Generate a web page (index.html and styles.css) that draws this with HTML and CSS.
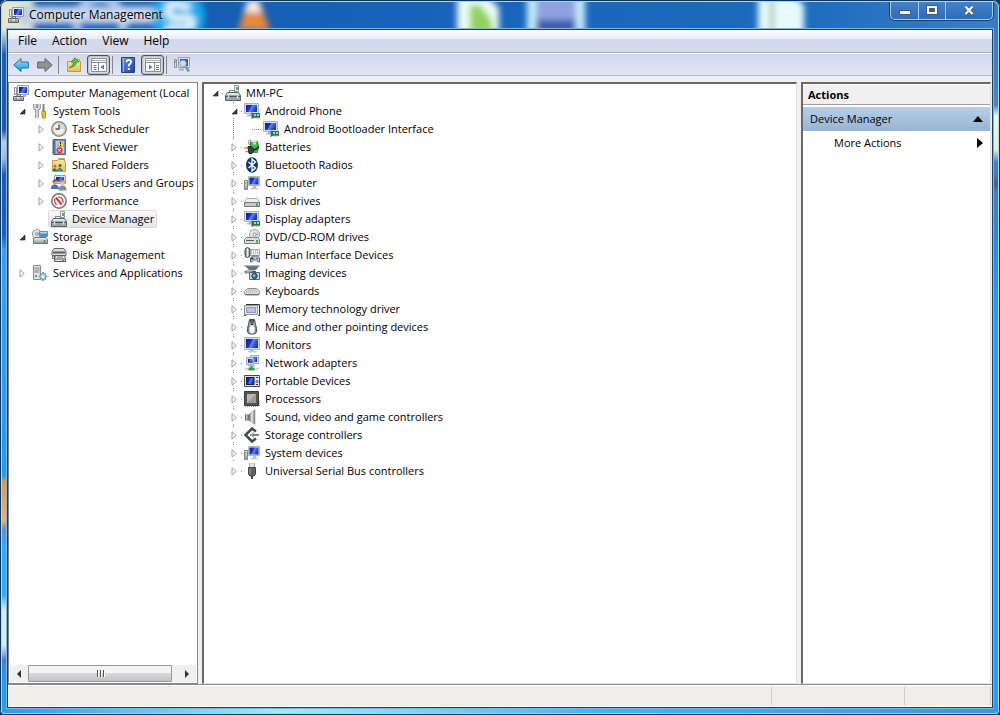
FILE: index.html
```html
<!DOCTYPE html>
<html lang="en">
<head>
<meta charset="utf-8">
<title>Computer Management</title>
<link rel="stylesheet" href="styles.css">
</head>
<body>
<svg width="0" height="0" class="defs" aria-hidden="true">
  <defs>
    <linearGradient id="scr" x1="0" y1="0" x2="1" y2="0.4"><stop offset="0" stop-color="#0a1790"/><stop offset=".5" stop-color="#1c39d8"/><stop offset=".55" stop-color="#5f8cf5"/><stop offset="1" stop-color="#1a35c8"/></linearGradient>
    <linearGradient id="metal" x1="0" y1="0" x2="0" y2="1"><stop offset="0" stop-color="#f4f6f7"/><stop offset="1" stop-color="#8d979d"/></linearGradient>
    <linearGradient id="metalH" x1="0" y1="0" x2="1" y2="0"><stop offset="0" stop-color="#5b6670"/><stop offset=".5" stop-color="#e6eaec"/><stop offset="1" stop-color="#66717a"/></linearGradient>
    <linearGradient id="folder" x1="0" y1="0" x2="0" y2="1"><stop offset="0" stop-color="#fdf0a8"/><stop offset="1" stop-color="#e9bd52"/></linearGradient>
    <linearGradient id="blueArrow" x1="0" y1="0" x2="0" y2="1"><stop offset="0" stop-color="#8fe0fb"/><stop offset="1" stop-color="#1a9be4"/></linearGradient>
    <linearGradient id="help" x1="0" y1="0" x2="1" y2="1"><stop offset="0" stop-color="#6f94e6"/><stop offset="1" stop-color="#1c3fae"/></linearGradient>
    <filter id="soft"><feGaussianBlur stdDeviation="3"/></filter>
  </defs>
  <symbol id="i-screen" viewBox="0 0 16 16"><path d="M.5.5h15v12H.5z" fill="#d9dce0" stroke="#b0b4b9"/><path d="M2 2h12v9H2z" fill="url(#scr)"/><path d="M6 13h4v1H6z" fill="#b9bdc2"/><path d="M4 14h9v1.500H4z" fill="#c9cccf"/></symbol>
  <symbol id="i-adapter" viewBox="0 0 16 16"><path d="M.5.5h14v10H.5z" fill="#d9dce0" stroke="#b0b4b9"/><path d="M2 2h11v7H2z" fill="url(#scr)"/><path d="M5 11h3v1H5zM3 12h5v1.500H3z" fill="#b4b8bd"/><path d="M8 10h8v5H8z" fill="#1f7a5c"/><path d="M7.500 9.500h1.200V16H7.500z" fill="#5c6468"/><path d="M10 11h2v2h-2zM13 11h2v2h-2z" fill="#9fd8c2"/><path d="M10 14.500h5v1h-5z" fill="#d6b944"/></symbol>
  <symbol id="i-computer" viewBox="0 0 16 16"><path d="M4.500 1.500h11v9h-11z" fill="#dfe2e6" stroke="#b0b4b9"/><path d="M5.500 2.500h9v7h-9z" fill="url(#scr)"/><path d="M9 11h3v2H9zM7 13h7v1.300H7z" fill="#bbbfc4"/><path d="M.5 5.500h3v9h-3z" fill="url(#metal)" stroke="#7f878d"/><path d="M1 7h1.500v1.500H1z" fill="#45d32f"/></symbol>
  <symbol id="i-mgmt" viewBox="0 0 16 16"><path d="M4.500.5h11v9h-11z" fill="#e7eaf0" stroke="#9aa1ab"/><path d="M6 2h8v6H6z" fill="url(#scr)"/><path d="M1.500 2.500h2v7h-2z" fill="#eef1f2" stroke="#8a9197"/><path d="M.5 11.500h10v4H.5z" fill="url(#metal)" stroke="#59626a"/><path d="M4 11V9.700h3.500V11" fill="none" stroke="#59626a"/><path d="M3 12.500v2M8 12.500v2" stroke="#4b545c"/><path d="M10 10h3v2h-3z" fill="#b4b9bf"/></symbol>
  <symbol id="i-toolbox" viewBox="0 0 16 16"><path d="M9.500.5h4v6h-4z" fill="#edf1ed" stroke="#929b9f"/><path d="M11 2h2v3h-2z" fill="#48b936"/><path d="M4.500 8V5.500h5V8" fill="none" stroke="#828c92"/><path d="M2.500 7.500h11l2 3v5H.5v-5z" fill="#98a5ab" stroke="#58646b"/><path d="M2.800 8h10.400l1.200 2H1.600z" fill="#dee4e6"/><path d="M1 11.500h14" stroke="#47545c"/><path d="M3.500 10.500v3M12.500 10.500v3" stroke="#dce3e6" stroke-width="1.500"/></symbol>
  <symbol id="i-tools" viewBox="0 0 16 16"><path d="M3 1v4l2 1.300L7 5V1M5 6v9" fill="none" stroke="#717a80" stroke-width="3.400" stroke-linejoin="round"/><path d="M3 1v4l2 1.300L7 5V1M5 6v9" fill="none" stroke="#e2e6e8" stroke-width="1.700"/><path d="M11.500 1v7" stroke="#798187" stroke-width="2"/><path d="M10 8h3.500v6.500q-1.700 2-3.500 0z" fill="#f4b62a" stroke="#b8791a" stroke-width=".8"/></symbol>
  <symbol id="i-clock" viewBox="0 0 16 16"><circle cx="8" cy="8" r="7.200" fill="#f6f2df" stroke="#82888d" stroke-width="1.500"/><path d="M8 8h6A6 6 0 0 0 8 2z" fill="#c6dcf1"/><circle cx="8" cy="8" r="5.700" fill="none" stroke="#d6d0ba"/><path d="M8 3.500V8H4.500" fill="none" stroke="#4e5357" stroke-width="1.300"/></symbol>
  <symbol id="i-event" viewBox="0 0 16 16"><path d="M2.500.5h12v15h-12z" fill="#7298cc" stroke="#426699"/><path d="M5 2h8v12H5z" fill="#b5cbe8"/><path d="M1 2h3M1 4h3M1 6h3M1 8h3M1 10h3M1 12h3M1 14h3" stroke="#505e72"/><path d="m9.500 1 4 6.500h-7z" fill="#ffd93c" stroke="#b58f10" stroke-width=".6"/><path d="M9.500 3v2.500M9.500 6v1" stroke="#222"/><circle cx="8.500" cy="11.300" r="3" fill="#df3535"/><path d="m7.300 10 2.400 2.500m0-2.500-2.400 2.500" stroke="#fff"/></symbol>
  <symbol id="i-shared" viewBox="0 0 16 16"><path d="M1.500 3.500h5l1-2h6v3h1v10h-13z" fill="url(#folder)" stroke="#c79d3d"/><path d="M8 2.500h5" stroke="#65a4dc"/><circle cx="4" cy="9" r="1.500" fill="#b86b3a"/><path d="M2 14q1-5 4 0" fill="#2c6a9f" stroke="#2c6a9f"/><circle cx="9" cy="8.500" r="1.500" fill="#8d4d27"/><path d="M6.500 14q2-6 5 0" fill="#38a0a2" stroke="#247c80"/></symbol>
  <symbol id="i-users" viewBox="0 0 16 16"><path d="M3.500.5h11v8h-11z" fill="#dfe2e6" stroke="#969ca3"/><path d="M5 2h8v5H5z" fill="url(#scr)"/><circle cx="4" cy="7" r="2.500" fill="#dca06e"/><path d="M1.700 7Q2 3.500 5 4.500L6 6Q3 5.500 1.700 8z" fill="#7b4a1d"/><path d="M0 14q0-5 4-4.500t4 4.500z" fill="#4774b6"/><circle cx="11.500" cy="8" r="2.400" fill="#efc69c"/><path d="M9 8q0-3.500 3-3t2 3.500Q12 6 9 8z" fill="#d0a020"/><path d="M7.500 15.500q0-5 4-5t4 5z" fill="#7d8f9d"/></symbol>
  <symbol id="i-perf" viewBox="0 0 16 16"><circle cx="8" cy="8" r="7.200" fill="#fbfbfb" stroke="#6d7377" stroke-width="1.500"/><path d="m5 4.500 5.500 7" stroke="#d51f26" stroke-width="2"/><path d="M5.500 12Q2.500 8.500 4 5.500M7.500 3.800q5 .5 4.500 6" fill="none" stroke="#d23a3f" stroke-width="1.300"/></symbol>
  <symbol id="i-storage" viewBox="0 0 16 16"><circle cx="5" cy="5" r="4.500" fill="#e0e6ea" stroke="#8b949b"/><path d="M5 5 9 2v6z" fill="#9fd8ad"/><circle cx="5" cy="5" r="1.300" fill="#fff" stroke="#7b858b"/><path d="M7.500 2.500h8v5h-8z" fill="#3d93ce" stroke="#7e8b93"/><path d="M8 3h7v1.500H8z" fill="#a7dcf5"/><path d="M1.500 9.500 3 8.500h11l1.500 2v4h-14z" fill="url(#metal)" stroke="#6c757b"/><path d="M11.500 11h2v2.500h-2z" fill="#36b22e"/></symbol>
  <symbol id="i-diskmgmt" viewBox="0 0 16 16"><path d="M3 1.500h10l2 3v4H1v-4z" fill="#dadddf" stroke="#62696e"/><path d="M2 5.500h12" stroke="#596166" stroke-width="2"/><path d="M1.500 8.500h2v3h-2z" fill="#c0c5c8" stroke="#6c7378"/><path d="m4.500 8.500-1 3v3h11v-3l-1-3z" fill="#e2e4e5" stroke="#555d62"/><path d="M6 10h6" stroke="#70787d"/><path d="M4 12h10" stroke="#596166"/><path d="M11 13.500h2" stroke="#36b22e"/></symbol>
  <symbol id="i-services" viewBox="0 0 16 16"><path d="M1.500.5h7v14h-7z" fill="#dfe4e7" stroke="#868f96"/><path d="M2.500 3h5M2.500 5h5M2.500 7h5" stroke="#78838b"/><path d="M3 10h2v2H3z" fill="#4cb73f"/><path d="M11 7v9M7 11.500h8.500M8 8.500l6 6M14 8.500l-6 6" stroke="#6e94b5" stroke-width="1.600"/><circle cx="11" cy="11.500" r="3" fill="#bed5e7" stroke="#6e94b5"/><circle cx="11" cy="11.500" r="1" fill="#fff"/></symbol>
  <symbol id="i-battery" viewBox="0 0 16 16"><path d="M6.500 2.500h7q2 5 0 11h-7z" fill="#35bf3b" stroke="#51845a"/><path d="M7 1h5.500v2H7z" fill="#dce9df"/><path d="M9 4.500h3" stroke="#c5f5c5" stroke-width="2"/><path d="M5.500 6Q3 1 7 1" fill="none" stroke="#777"/><path d="M0 9h4M1 12.500h4" stroke="#c4a03b" stroke-width="1.500"/><path d="M4 7.500h3q5 3 1 7H5z" fill="#3b4243" stroke="#1d2426"/><path d="M9 10.500q3 1 6-3" fill="none" stroke="#28302f" stroke-width="1.700"/></symbol>
  <symbol id="i-bluetooth" viewBox="0 0 16 16"><ellipse cx="8" cy="8" rx="6" ry="7.800" fill="#0b3679"/><path d="m4.500 5 7 6L8 14V2l3.500 3-7 6" fill="none" stroke="#fff" stroke-width="1.300"/></symbol>
  <symbol id="i-disk" viewBox="0 0 16 16"><path d="M2.500 5.500h11l2 3.500v4.500H.5V9z" fill="#f0f0f0" stroke="#a6a9ab"/><path d="M.5 9.500h15v4H.5z" fill="#c6c8c9" stroke="#777b7e"/><path d="M12 10.500h2v2.500h-2z" fill="#35b52c"/></symbol>
  <symbol id="i-dvd" viewBox="0 0 16 16"><circle cx="10.500" cy="5.500" r="5" fill="#e4e6e7" stroke="#999fa2"/><path d="m10.500 5.500 4-3v5z" fill="#a3d8af"/><circle cx="10.500" cy="5.500" r="1.500" fill="#fff" stroke="#888"/><path d="M2.500 8.500h11l2 2v4H.5v-4z" fill="#dcdfdf" stroke="#7b8285"/><path d="M2 11.500h8" stroke="#535a5e"/><path d="M12 11h2v2.500h-2z" fill="#35b52c"/></symbol>
  <symbol id="i-hid" viewBox="0 0 16 16"><path d="M5.500 2.500h10v6h-10z" fill="#e8e9ea" stroke="#a3a8ac"/><path d="M7 4h8M7 6h8" stroke="#9ba0a4" stroke-dasharray="1"/><path d="M3.500.5q2.500 0 2.500 4v3q0 3-2.500 3t-2.500-3v-3q0-4 2.500-4z" fill="url(#metalH)" stroke="#3b444b"/><path d="M6.500 15q-1-5 2-6h5q3 1 2 6-1 1-3-2h-3q-2 3-3 2z" fill="#bac7d0" stroke="#576977"/><path d="M8 10v3M6.700 11.500h3" stroke="#32424d"/><circle cx="13" cy="11.500" r="1" fill="#3d7cc9"/></symbol>
  <symbol id="i-imaging" viewBox="0 0 16 16"><path d="M1 1h14l-3 4H5z" fill="#637179"/><path d="M0 .8h16" stroke="#8e9a9f"/><path d="M1 6h10v2H1z" fill="#b6c2c8" stroke="#728088"/><path d="M5.500 7.500h10v7h-10z" fill="#d2dadd" stroke="#536570"/><path d="M8 6h4v1.500H8z" fill="#4c5d67"/><circle cx="10.500" cy="11" r="2.700" fill="#3279b5" stroke="#263f50"/><circle cx="10" cy="10.500" r=".9" fill="#bce6fa"/></symbol>
  <symbol id="i-keyboard" viewBox="0 0 16 16"><path d="M3.500 5.500h9l3 3v1.500q0 2-2 2h-11q-2 0-2-2V8.500z" fill="#d9dcdf" stroke="#8a8f93"/><path d="M3.500 7h9M2 9h12" stroke="#a5aaae" stroke-dasharray="1"/><path d="M1 11.500h14" stroke="#6b7175"/></symbol>
  <symbol id="i-memory" viewBox="0 0 16 16"><path d="M2 3.500h13.500v11H14M.5 12v2.500H2" fill="none" stroke="#30353a"/><path d="M.5 4.500h13v9H.5z" fill="#dfe4f0" stroke="#8f99aa"/><path d="M2.500 6.500h9v5h-9z" fill="#b6c4dd" stroke="#8b9bb7"/></symbol>
  <symbol id="i-mouse" viewBox="0 0 16 16"><path d="M5.500.5h5l1 5q3 9-1.500 9.500H6Q1.500 14.500 4.500 5.500z" fill="url(#metalH)" stroke="#4d5255"/><path d="M6 1h4L9 6H7z" fill="#22272a"/><path d="M7.500 1h1v4h-1z" fill="#aaa"/><ellipse cx="8" cy="10.500" rx="2.600" ry="3.500" fill="#f8f8f8"/></symbol>
  <symbol id="i-network" viewBox="0 0 16 16"><path d="M6.500.5h8v8h-8z" fill="#d7dadf" stroke="#a8adb3"/><path d="M8 2h5v5H8z" fill="url(#scr)"/><path d="M2.500 2.500h7v7h-7z" fill="#d7dadf" stroke="#a8adb3"/><path d="M4 4h4.500v4H4z" fill="url(#scr)"/><path d="M4 10h7v1.500H4z" fill="#bbb"/><path d="M7.500 11v3" stroke="#24a05e" stroke-width="2"/><path d="M1 14h14" stroke="#8fb9a2"/><path d="M4.500 12.500h6v3h-6z" fill="#24a05e"/></symbol>
  <symbol id="i-portable" viewBox="0 0 16 16"><path d="M.5 2.500h15v11H.5z" fill="#dfe0df" stroke="#43494d"/><path d="M2 4h8.500v8H2z" fill="#151c4b"/><path d="M3 5h6.500v6H3z" fill="url(#scr)"/><circle cx="13" cy="8.500" r="1.600" fill="#7a8387"/><path d="M12 4.500h2M12 11.500h2" stroke="#292f32"/></symbol>
  <symbol id="i-cpu" viewBox="0 0 16 16"><path d="M1 15.500h14M15.500 10v5" stroke="#c39b3b" stroke-dasharray="1"/><path d="M.5.500h14v14H.5z" fill="#555" stroke="#3c3c3c"/><path d="M3 3h9v9H3z" fill="#b8b8b8"/><path d="M12 3v9H3z" fill="#9a9a9a"/></symbol>
  <symbol id="i-sound" viewBox="0 0 16 16"><path d="M1 5.500h5v6H1z" fill="#566570"/><path d="M2 6h1.500v5H2z" fill="#c4ccd1"/><path d="M5 5.500 11 .500v15L5 11.500z" fill="url(#metalH)" stroke="#8f9aa1" stroke-width=".6"/></symbol>
  <symbol id="i-storctl" viewBox="0 0 16 16"><path d="M12 4.500 8 1.500 1.500 8 8 14.500l4-3" fill="none" stroke="#454a4d" stroke-width="2.600"/><path d="M6 8h9" stroke="#777d80" stroke-width="2"/><path d="m10 5.500-3 2.500 3 2.500" fill="none" stroke="#a4a9ab" stroke-width="1.300"/></symbol>
  <symbol id="i-usb" viewBox="0 0 16 16"><path d="M5.500 0h5v5h-5z" fill="#e7e7e7" stroke="#aaa"/><path d="M4.500 4.500h7V11L10 13H6l-1.500-2z" fill="#5e6264" stroke="#45494b"/><path d="M6 6v5" stroke="#a1a5a7"/><path d="M8 13v3" stroke="#45494b" stroke-width="2"/></symbol>
  <symbol id="i-back" viewBox="0 0 16 16"><path d="M.8 8 8 1.500V5h7.300v6H8v3.500z" fill="url(#blueArrow)" stroke="#2b6fa8"/></symbol>
  <symbol id="i-fwd" viewBox="0 0 16 16"><path d="M15.200 8 8 1.500V5H.7v6H8v3.500z" fill="#929292" stroke="#666"/></symbol>
  <symbol id="i-up" viewBox="0 0 16 16"><path d="M1.500 4.500h5l1.500-2h5.500v2h1v10h-13z" fill="url(#folder)" stroke="#c89a36"/><path d="M3 10.500Q7 10 7.500 5H5L9 .8 13 5h-2.500Q10 10 3 10.500z" fill="#54c83a" stroke="#2e8b22" stroke-width=".8"/></symbol>
  <symbol id="i-paneL" viewBox="0 0 16 16"><path d="M.5 1.500h15v13H.5z" fill="#fff" stroke="#8b8e91"/><path d="M1 3.500h14" stroke="#a9acaf"/><path d="M1 5.500h14M7.500 6v8" stroke="#8b8e91"/><path d="M2.500 8.500h3M2.500 10.500h3M2.500 12.500h3" stroke="#567cc0"/><path d="M13 7.500v5L9.500 10z" fill="#29a32b"/></symbol>
  <symbol id="i-paneR" viewBox="0 0 16 16"><path d="M.5 1.500h15v13H.5z" fill="#fff" stroke="#8b8e91"/><path d="M1 3.500h14" stroke="#a9acaf"/><path d="M1 5.500h14M9.500 6v8" stroke="#8b8e91"/><path d="M11 8.500h3M11 10.500h3M11 12.500h3" stroke="#567cc0"/><path d="M4 7.500v5L7.500 10z" fill="#29a32b"/></symbol>
  <symbol id="i-help" viewBox="0 0 16 16"><path d="M1.500.5h13v15h-13z" fill="url(#help)" stroke="#24408d"/><path d="M3.500 1v14" stroke="#94b1ec"/><path d="M6.500 5.200q.2-2.200 2.300-2.200t2.200 2q0 1.200-1.200 2T8.700 9.500" fill="none" stroke="#fff" stroke-width="1.800"/><path d="M7.800 11h2v2h-2z" fill="#fff"/></symbol>
  <symbol id="i-scan" viewBox="0 0 16 16"><path d="M4.500.5h11v10h-11z" fill="#e4e6ea" stroke="#9a9fa5"/><path d="M6 2h8v7H6z" fill="#2e50c8"/><path d="M.5 2.500h2v8h-2z" fill="#dce1df" stroke="#8b9294"/><path d="M1 4h1.500v1.500H1z" fill="#34c725"/><circle cx="9" cy="6.500" r="3.300" fill="#bce2f8" stroke="#8ca2bb"/><path d="m11.500 9.500 3.500 5" stroke="#8290a2" stroke-width="2.500"/><path d="M5 12.500h5" stroke="#a8adb2" stroke-width="2"/></symbol>
  <symbol id="t-open" viewBox="0 0 8 8"><path d="M7 2v5H2z" fill="#3c3c3c" stroke="#1e1e1e" stroke-width=".6"/></symbol>
  <symbol id="t-closed" viewBox="0 0 8 8"><path d="M2 .7 6.200 4.500 2 8z" fill="#fff" stroke="#9c9c9c"/></symbol>
</svg>

<div class="window">
  <svg class="wallpaper" aria-hidden="true">
    <g filter="url(#soft)">
      <rect x="-4" y="-4" width="38" height="44" fill="#e4e6cf"/>
      <rect x="20" y="6" width="150" height="18" fill="#b8c8e3"/>
      <circle cx="100" cy="22" r="24" fill="none" stroke="#b7cdee" stroke-width="8"/>
      <circle cx="178" cy="16" r="27" fill="#19a9ea"/>
      <path d="M190 8Q168 0 168 10t14 8 8 10h-24" fill="none" stroke="#e5f8ff" stroke-width="7"/>
      <path d="M249-3h9l12 33h-32z" fill="#e58a3a"/><path d="M247 2h12l3 10h-18z" fill="#f4efec"/>
      <path d="M457-4h30l12 12v30h-42z" fill="#ebfbf2"/><path d="M470 5h10l12 16v18h-22z" fill="#8ed35e"/>
      <path d="M527-4h58v42h-58z" fill="#c8edff"/><path d="M536-4h40v42h-40z" fill="#8ea2e0"/><path d="M536 20h40v12h-40z" fill="#3a58aa"/>
      <path d="M758-4h36l10 9v33h-46z" fill="#e6fbff"/><path d="M770-4h4v42h-4z" fill="#a5bf91"/>
    </g>
  </svg>
  <header class="titlebar">
    <svg class="icon"><use href="#i-mgmt"/></svg>
    <h1>Computer Management</h1>
    <div class="caption">
      <button class="cap-min" aria-label="Minimize"><svg viewBox="0 0 12 12"><path d="M.5 6.500h11v4H.5z" fill="#f5f5f5" stroke="#4b5573"/></svg></button>
      <button class="cap-max" aria-label="Maximize"><svg viewBox="0 0 12 12"><path d="M.5 1.500h11v9H.5z" fill="#f5f5f5" stroke="#4b5573"/><path d="M3.500 4.500h5v3h-5z" fill="#2765ae" stroke="#4b5573"/></svg></button>
      <button class="cap-close" aria-label="Close"><svg viewBox="0 0 12 12"><path d="m2.500 2.500 7 7.500m0-7.500-7 7.500" stroke="#4b5573" stroke-width="4.200"/><path d="m2.500 2.500 7 7.500m0-7.500-7 7.500" stroke="#f8f8f8" stroke-width="2.400"/></svg></button>
    </div>
  </header>

  <div class="client">
    <nav class="menubar" aria-label="Menu">
      <button>File</button><button>Action</button><button>View</button><button>Help</button>
    </nav>
    <div class="toolbar" role="toolbar" aria-label="Tools">
      <button aria-label="Back"><svg class="icon"><use href="#i-back"/></svg></button>
      <button aria-label="Forward"><svg class="icon"><use href="#i-fwd"/></svg></button>
      <span class="sep"></span>
      <button aria-label="Up one level"><svg class="icon"><use href="#i-up"/></svg></button>
      <button class="pressed" aria-label="Show console tree" aria-pressed="true"><svg class="icon"><use href="#i-paneL"/></svg></button>
      <span class="sep"></span>
      <button aria-label="Help topics"><svg class="icon"><use href="#i-help"/></svg></button>
      <button class="pressed" aria-label="Show action pane" aria-pressed="true"><svg class="icon"><use href="#i-paneR"/></svg></button>
      <span class="sep"></span>
      <button aria-label="Scan for hardware changes"><svg class="icon"><use href="#i-scan"/></svg></button>
    </div>

    <main class="panes">
      <section class="pane nav-pane" aria-label="Console tree">
        <ul class="tree nav-tree">
          <li><div class="row"><svg class="icon"><use href="#i-mgmt"/></svg><span>Computer Management (Local</span></div>
            <ul>
              <li><div class="row"><button class="toggle" aria-label="Collapse System Tools"><svg><use href="#t-open"/></svg></button><svg class="icon"><use href="#i-tools"/></svg><span>System Tools</span></div>
                <ul>
                  <li><div class="row"><button class="toggle" aria-label="Expand Task Scheduler"><svg><use href="#t-closed"/></svg></button><svg class="icon"><use href="#i-clock"/></svg><span>Task Scheduler</span></div></li>
                  <li><div class="row"><button class="toggle" aria-label="Expand Event Viewer"><svg><use href="#t-closed"/></svg></button><svg class="icon"><use href="#i-event"/></svg><span>Event Viewer</span></div></li>
                  <li><div class="row"><button class="toggle" aria-label="Expand Shared Folders"><svg><use href="#t-closed"/></svg></button><svg class="icon"><use href="#i-shared"/></svg><span>Shared Folders</span></div></li>
                  <li><div class="row"><button class="toggle" aria-label="Expand Local Users and Groups"><svg><use href="#t-closed"/></svg></button><svg class="icon"><use href="#i-users"/></svg><span>Local Users and Groups</span></div></li>
                  <li><div class="row"><button class="toggle" aria-label="Expand Performance"><svg><use href="#t-closed"/></svg></button><svg class="icon"><use href="#i-perf"/></svg><span>Performance</span></div></li>
                  <li><div class="row leaf selected"><svg class="icon"><use href="#i-toolbox"/></svg><span>Device Manager</span></div></li>
                </ul>
              </li>
              <li><div class="row"><button class="toggle" aria-label="Collapse Storage"><svg><use href="#t-open"/></svg></button><svg class="icon"><use href="#i-storage"/></svg><span>Storage</span></div>
                <ul>
                  <li><div class="row leaf"><svg class="icon"><use href="#i-diskmgmt"/></svg><span>Disk Management</span></div></li>
                </ul>
              </li>
              <li><div class="row"><button class="toggle" aria-label="Expand Services and Applications"><svg><use href="#t-closed"/></svg></button><svg class="icon"><use href="#i-services"/></svg><span>Services and Applications</span></div></li>
            </ul>
          </li>
        </ul>
        <div class="scrollbar">
          <button aria-label="Scroll left"><svg viewBox="0 0 8 8"><path d="M6 0v8L2 4z" fill="#333"/></svg></button>
          <div class="track"><div class="thumb"><i></i><i></i><i></i></div></div>
          <button aria-label="Scroll right"><svg viewBox="0 0 8 8"><path d="M2 0v8l4-4z" fill="#333"/></svg></button>
        </div>
      </section>

      <section class="pane device-pane" aria-label="Devices">
        <ul class="tree device-tree">
          <li><div class="row"><button class="toggle" aria-label="Collapse MM-PC"><svg><use href="#t-open"/></svg></button><svg class="icon"><use href="#i-toolbox"/></svg><span>MM-PC</span></div>
            <ul>
              <li><div class="row"><button class="toggle" aria-label="Collapse Android Phone"><svg><use href="#t-open"/></svg></button><svg class="icon"><use href="#i-adapter"/></svg><span>Android Phone</span></div>
                <ul>
                  <li class="end"><div class="row leaf"><svg class="icon"><use href="#i-adapter"/></svg><span>Android Bootloader Interface</span></div></li>
                </ul>
              </li>
              <li><div class="row"><button class="toggle" aria-label="Expand Batteries"><svg><use href="#t-closed"/></svg></button><svg class="icon"><use href="#i-battery"/></svg><span>Batteries</span></div></li>
              <li><div class="row"><button class="toggle" aria-label="Expand Bluetooth Radios"><svg><use href="#t-closed"/></svg></button><svg class="icon"><use href="#i-bluetooth"/></svg><span>Bluetooth Radios</span></div></li>
              <li><div class="row"><button class="toggle" aria-label="Expand Computer"><svg><use href="#t-closed"/></svg></button><svg class="icon"><use href="#i-computer"/></svg><span>Computer</span></div></li>
              <li><div class="row"><button class="toggle" aria-label="Expand Disk drives"><svg><use href="#t-closed"/></svg></button><svg class="icon"><use href="#i-disk"/></svg><span>Disk drives</span></div></li>
              <li><div class="row"><button class="toggle" aria-label="Expand Display adapters"><svg><use href="#t-closed"/></svg></button><svg class="icon"><use href="#i-adapter"/></svg><span>Display adapters</span></div></li>
              <li><div class="row"><button class="toggle" aria-label="Expand DVD/CD-ROM drives"><svg><use href="#t-closed"/></svg></button><svg class="icon"><use href="#i-dvd"/></svg><span>DVD/CD-ROM drives</span></div></li>
              <li><div class="row"><button class="toggle" aria-label="Expand Human Interface Devices"><svg><use href="#t-closed"/></svg></button><svg class="icon"><use href="#i-hid"/></svg><span>Human Interface Devices</span></div></li>
              <li><div class="row"><button class="toggle" aria-label="Expand Imaging devices"><svg><use href="#t-closed"/></svg></button><svg class="icon"><use href="#i-imaging"/></svg><span>Imaging devices</span></div></li>
              <li><div class="row"><button class="toggle" aria-label="Expand Keyboards"><svg><use href="#t-closed"/></svg></button><svg class="icon"><use href="#i-keyboard"/></svg><span>Keyboards</span></div></li>
              <li><div class="row"><button class="toggle" aria-label="Expand Memory technology driver"><svg><use href="#t-closed"/></svg></button><svg class="icon"><use href="#i-memory"/></svg><span>Memory technology driver</span></div></li>
              <li><div class="row"><button class="toggle" aria-label="Expand Mice and other pointing devices"><svg><use href="#t-closed"/></svg></button><svg class="icon"><use href="#i-mouse"/></svg><span>Mice and other pointing devices</span></div></li>
              <li><div class="row"><button class="toggle" aria-label="Expand Monitors"><svg><use href="#t-closed"/></svg></button><svg class="icon"><use href="#i-screen"/></svg><span>Monitors</span></div></li>
              <li><div class="row"><button class="toggle" aria-label="Expand Network adapters"><svg><use href="#t-closed"/></svg></button><svg class="icon"><use href="#i-network"/></svg><span>Network adapters</span></div></li>
              <li><div class="row"><button class="toggle" aria-label="Expand Portable Devices"><svg><use href="#t-closed"/></svg></button><svg class="icon"><use href="#i-portable"/></svg><span>Portable Devices</span></div></li>
              <li><div class="row"><button class="toggle" aria-label="Expand Processors"><svg><use href="#t-closed"/></svg></button><svg class="icon"><use href="#i-cpu"/></svg><span>Processors</span></div></li>
              <li><div class="row"><button class="toggle" aria-label="Expand Sound, video and game controllers"><svg><use href="#t-closed"/></svg></button><svg class="icon"><use href="#i-sound"/></svg><span>Sound, video and game controllers</span></div></li>
              <li><div class="row"><button class="toggle" aria-label="Expand Storage controllers"><svg><use href="#t-closed"/></svg></button><svg class="icon"><use href="#i-storctl"/></svg><span>Storage controllers</span></div></li>
              <li><div class="row"><button class="toggle" aria-label="Expand System devices"><svg><use href="#t-closed"/></svg></button><svg class="icon"><use href="#i-computer"/></svg><span>System devices</span></div></li>
              <li class="end"><div class="row"><button class="toggle" aria-label="Expand Universal Serial Bus controllers"><svg><use href="#t-closed"/></svg></button><svg class="icon"><use href="#i-usb"/></svg><span>Universal Serial Bus controllers</span></div></li>
            </ul>
          </li>
        </ul>
      </section>

      <aside class="pane actions-pane">
        <h2>Actions</h2>
        <button class="group">Device Manager<svg viewBox="0 0 10 6"><path d="M0 6h10L5 0z" fill="#000"/></svg></button>
        <button class="action">More Actions<svg viewBox="0 0 6 10"><path d="M0 0v10l6-5z" fill="#000"/></svg></button>
      </aside>
    </main>
    <footer class="statusbar"><span class="grow"></span><span class="mid"></span><span class="last"></span></footer>
  </div>
</div>
</body>
</html>
```

FILE: styles.css
```css
* { box-sizing: border-box; }
body {
  margin: 0;
  height: 100vh;
  overflow: hidden;
  font: 12px/18px "Open Sans", sans-serif;
  color: #000;
  background: #0b3563;
}
ul { margin: 0; padding: 0; list-style: none; }
button { font: inherit; color: inherit; background: none; border: 0; padding: 0; margin: 0; }
.defs { position: absolute; }
.wallpaper { position: absolute; left: 0; top: 0; width: 100%; height: 29px; }
.icon { width: 16px; height: 16px; flex: none; display: block; }

.window {
  position: relative;
  height: 100vh;
  display: flex;
  flex-direction: column;
  padding: 0 8px 8px;
  border-radius: 7px 7px 5px 5px;
  overflow: hidden;
  background:
    linear-gradient(90deg, #1aa0f4, #8ff4fa 28%, #3ab8fa 60%, #2a9cf5) bottom / 100% 8px no-repeat,
    linear-gradient(#dfe6d0 0, #dfe6d0 30px, #1d5fb8 55px, #1a59b0 130px, #b4cfe6 142px, #9dbce0 158px, #1a5cb5 175px, #1763b9 235px, #35a0f0 250px, #1e9df2 475px, #e8963e 482px, #f0b06a 520px, #6a8cc0 530px, #27b2f8 545px, #27b2f8 595px, #d9efff 610px, #d9efff 645px, #4c80c4 660px, #1e9df2 680px) left / 8px 100% no-repeat,
    linear-gradient(#2f78c9 0, #3f86cf 105px, #e9fbef 116px, #e4efc8 150px, #3f86cf 162px, #3c7ec2 175px, #44627f 184px, #3f7fc2 192px, #2a8ae0 240px, #2a9cf5 320px) right / 8px 100% no-repeat,
    linear-gradient(90deg, #1258ab, #1763bb 40%, #1c6bbd 80%, #3c7fc8);
}
.window::after {
  content: "";
  position: absolute;
  inset: 0;
  border-radius: inherit;
  box-shadow: inset 0 0 0 1px #0b3563, inset 0 0 0 2px #a9d6f4;
  pointer-events: none;
}
.titlebar { position: relative; height: 30px; flex: none; display: flex; align-items: center; gap: 5px; }
.titlebar h1 { margin: 0; flex: 1; font-size: 12px; font-weight: 400; text-shadow: 0 0 6px #fff, 0 0 8px #fff; }
.caption {
  align-self: flex-start;
  display: flex;
  height: 19px;
  margin: 1px -1px 0 0;
  border: 1px solid #a8cdf0;
  border-top: 0;
  border-radius: 0 0 5px 5px;
  box-shadow: 0 0 0 1px #173f7c;
  background: linear-gradient(#4583c8, #2a6dbb);
}
.caption button { display: flex; align-items: center; justify-content: center; width: 27px; }
.caption .cap-close { width: 47px; }
.caption button + button { border-left: 1px solid #a8cdf0; }
.caption svg { width: 12px; height: 12px; fill: none; }

.client {
  position: relative;
  flex: 1;
  min-height: 0;
  display: flex;
  flex-direction: column;
  background: #f0f0f0;
  box-shadow: 0 0 0 1px #163d6c, 0 0 0 2px #8ab4e0;
}
.menubar {
  flex: none;
  display: flex;
  height: 23px;
  padding: 0 2px;
  background: linear-gradient(#fff, #e6ebf5 9px, #d3daec 9px);
  border-bottom: 1px solid #b0b0b6;
}
.menubar button { padding: 0 7px 0 8px; }
.toolbar {
  flex: none;
  display: flex;
  align-items: center;
  gap: 2px;
  height: 23px;
  padding: 0 2px;
  border-top: 1px solid #fff;
  border-bottom: 1px solid #b3b8d0;
  background: linear-gradient(#d2d8ec, #e2e7f6);
}
.toolbar button { display: flex; align-items: center; justify-content: center; width: 22px; height: 20px; }
.toolbar .pressed { border: 1px solid #4f5258; border-radius: 3px; background: #dde0e8; box-shadow: inset 0 0 2px #777; width: 23px; }
.toolbar .sep { width: 1px; height: 18px; margin-right: 2px; background: #85868c; }

.panes {
  flex: 1;
  min-height: 0;
  display: grid;
  grid-template-columns: 190px minmax(0, 1fr) 190px;
  gap: 4px;
  padding: 6px 1px 0 0;
}
.pane { background: #fff; overflow: hidden; border: 1px solid #e3e3e3; min-height: 0; font-size: 11px; }
.nav-pane { display: flex; flex-direction: column; border-color: #828790; padding: 1px 0; }
.device-pane, .actions-pane { border-top: 2px solid #696969; border-left: 2px solid #696969; }

.tree { flex: 1; white-space: nowrap; }
.tree ul { padding-left: 19px; }
.row { display: flex; align-items: center; gap: 5px; height: 18px; }
.leaf { margin-left: 17px; }
.toggle { display: flex; align-items: center; justify-content: center; width: 14px; height: 14px; margin-right: -2px; background: #fff; flex: none; }
.toggle svg { width: 8px; height: 10px; }
.nav-tree { padding-left: 4px; }
.nav-tree > li > ul { padding-left: 2px; }
.selected {
  width: max-content;
  margin-left: 14px;
  padding: 0 2px;
  border: 1px solid #d9d9d9;
  border-radius: 3px;
  background: linear-gradient(#f9f9f9, #e6e6e6);
}
.device-tree { padding-left: 4px; }
.device-tree ul > li { background: linear-gradient(#808080 50%, transparent 50%) 6px 0 / 1px 2px repeat-y; }
.device-tree ul > li.end { background: none; }
.device-tree .row { background: repeating-linear-gradient(90deg, #909090 0 1px, transparent 1px 2px) 6px 9px / 10px 1px no-repeat; }
.device-tree .leaf { padding-left: 17px; margin-left: 0; }

.scrollbar { flex: none; display: flex; height: 17px; margin: 0 1px; background: #f0f0f0; }
.scrollbar button { width: 18px; display: flex; align-items: center; justify-content: center; }
.scrollbar svg { width: 8px; height: 8px; }
.track { flex: 1; display: flex; }
.thumb {
  width: 96%;
  display: flex;
  align-items: center;
  justify-content: center;
  gap: 2px;
  border: 1px solid #979797;
  border-radius: 1px;
  background: linear-gradient(#f4f4f4 45%, #d8d8da 50%, #c4c4c8);
}
.thumb i { width: 1px; height: 7px; background: #555; box-shadow: 1px 0 #fff; }

.actions-pane { display: flex; flex-direction: column; }
.actions-pane h2 { margin: 1px 0 2px; padding: 1px 5px 0; font-size: 11px; line-height: 18px; font-weight: 700; background: #f0f0f0; border-bottom: 1px solid #a0a0a0; }
.actions-pane button { display: flex; align-items: center; justify-content: space-between; height: 24px; text-align: left; padding: 0 7px; }
.actions-pane .group { background: linear-gradient(#b6cfe8, #98b3d3); }
.actions-pane .action { padding-left: 31px; }
.group svg { width: 10px; height: 6px; }
.action svg { width: 6px; height: 10px; }

.statusbar { flex: none; display: flex; height: 23px; padding-right: 1px; border-top: 1px solid #8c8c8c; background: #f0edec; box-shadow: inset 0 1px #fff, inset 0 -1px #fff; }
.statusbar span { border-right: 1px solid #d2d0cf; margin: 2px 0; }
.grow { flex: 1; }
.mid { width: 133px; }
.last { width: 86px; }
```
